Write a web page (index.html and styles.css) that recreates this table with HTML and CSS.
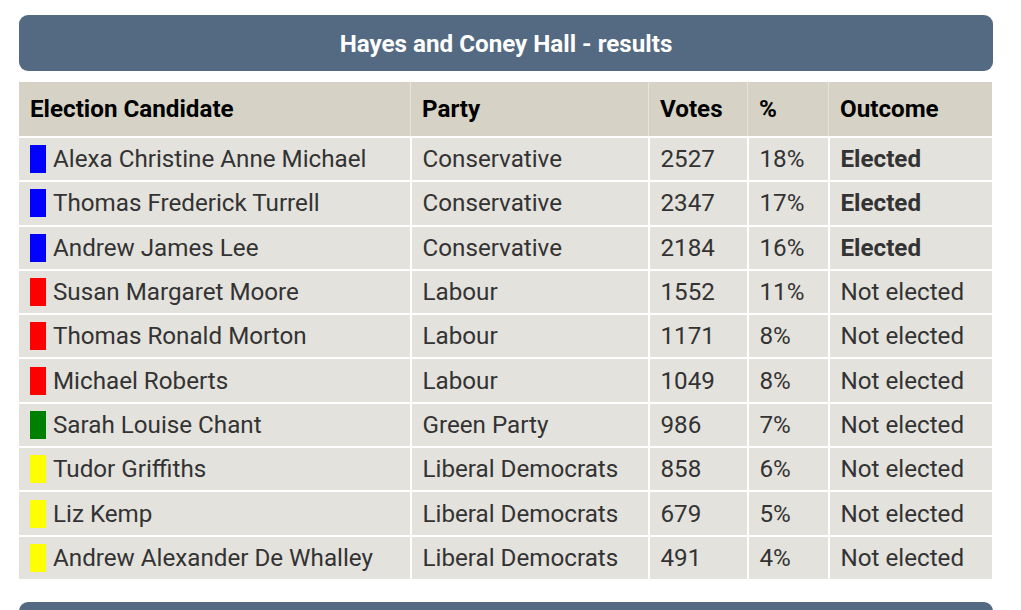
FILE: index.html
```html
<!DOCTYPE html>
<html>
<head>
<meta charset="utf-8">
<link rel="stylesheet" href="styles.css">
</head>
<body>
<div class="page">
  <div class="banner">Hayes and Coney Hall - results</div>
  <table class="results">
    <thead>
      <tr>
        <th class="c-name">Election Candidate</th>
        <th class="c-party">Party</th>
        <th class="c-votes">Votes</th>
        <th class="c-pct">%</th>
        <th class="c-out">Outcome</th>
      </tr>
    </thead>
    <tbody>
      <tr><td><span class="sw con"></span>Alexa Christine Anne Michael</td><td>Conservative</td><td>2527</td><td>18%</td><td class="won">Elected</td></tr>
      <tr><td><span class="sw con"></span>Thomas Frederick Turrell</td><td>Conservative</td><td>2347</td><td>17%</td><td class="won">Elected</td></tr>
      <tr><td><span class="sw con"></span>Andrew James Lee</td><td>Conservative</td><td>2184</td><td>16%</td><td class="won">Elected</td></tr>
      <tr><td><span class="sw lab"></span>Susan Margaret Moore</td><td>Labour</td><td>1552</td><td>11%</td><td>Not elected</td></tr>
      <tr><td><span class="sw lab"></span>Thomas Ronald Morton</td><td>Labour</td><td>1171</td><td>8%</td><td>Not elected</td></tr>
      <tr><td><span class="sw lab"></span>Michael Roberts</td><td>Labour</td><td>1049</td><td>8%</td><td>Not elected</td></tr>
      <tr><td><span class="sw grn"></span>Sarah Louise Chant</td><td>Green Party</td><td>986</td><td>7%</td><td>Not elected</td></tr>
      <tr><td><span class="sw lib"></span>Tudor Griffiths</td><td>Liberal Democrats</td><td>858</td><td>6%</td><td>Not elected</td></tr>
      <tr><td><span class="sw lib"></span>Liz Kemp</td><td>Liberal Democrats</td><td>679</td><td>5%</td><td>Not elected</td></tr>
      <tr><td><span class="sw lib"></span>Andrew Alexander De Whalley</td><td>Liberal Democrats</td><td>491</td><td>4%</td><td>Not elected</td></tr>
    </tbody>
  </table>
  <div class="banner next"></div>
</div>
</body>
</html>
```
FILE: styles.css
```css
html, body {
  margin: 0;
  padding: 0;
  background: #ffffff;
}
body {
  font-family: Roboto, "Liberation Sans", sans-serif;
  overflow: hidden;
  height: 610px;
}
.page {
  padding: 15px 28px 0 19px;
  display: flex;
  flex-direction: column;
}
.banner {
  background: #536a82;
  color: #ffffff;
  border-radius: 9px;
  height: 56px;
  flex: 0 0 56px;
  display: flex;
  align-items: center;
  justify-content: center;
  font-weight: bold;
  font-size: 24.2px;
  padding-top: 2px;
  width: 974px;
  box-sizing: border-box;
}
.banner.next {
  margin-top: 23px;
}
.results {
  margin-top: 11px;
  width: 973px;
  border-collapse: collapse;
  table-layout: fixed;
}
.results th, .results td {
  text-align: left;
  padding: 0 0 0 11px;
  vertical-align: middle;
  white-space: nowrap;
}
.results th {
  background: #d6d3c6;
  color: #000000;
  font-weight: bold;
  font-size: 24.2px;
  height: 54px;
  border-bottom: 2px solid #ffffff;
}
.results th + th {
  border-left: 1px solid #e6e4dc;
}
.results td {
  background: #e4e2dd;
  color: #333333;
  font-size: 24.2px;
  height: 42.3px;
}
.results td + td {
  border-left: 2px solid #ffffff;
}
.results tbody tr + tr td {
  border-top: 2px solid #ffffff;
}
.c-name { width: 380px; }
.c-party { width: 226px; }
.c-votes { width: 87px; }
.c-pct { width: 69px; }
.results td.won {
  font-weight: bold;
}
.sw {
  display: inline-block;
  width: 16px;
  height: 28px;
  margin-right: 7px;
  vertical-align: -6px;
}
.con { background: #0000ff; }
.lab { background: #ff0000; }
.grn { background: #008000; }
.lib { background: #ffff00; }
```
